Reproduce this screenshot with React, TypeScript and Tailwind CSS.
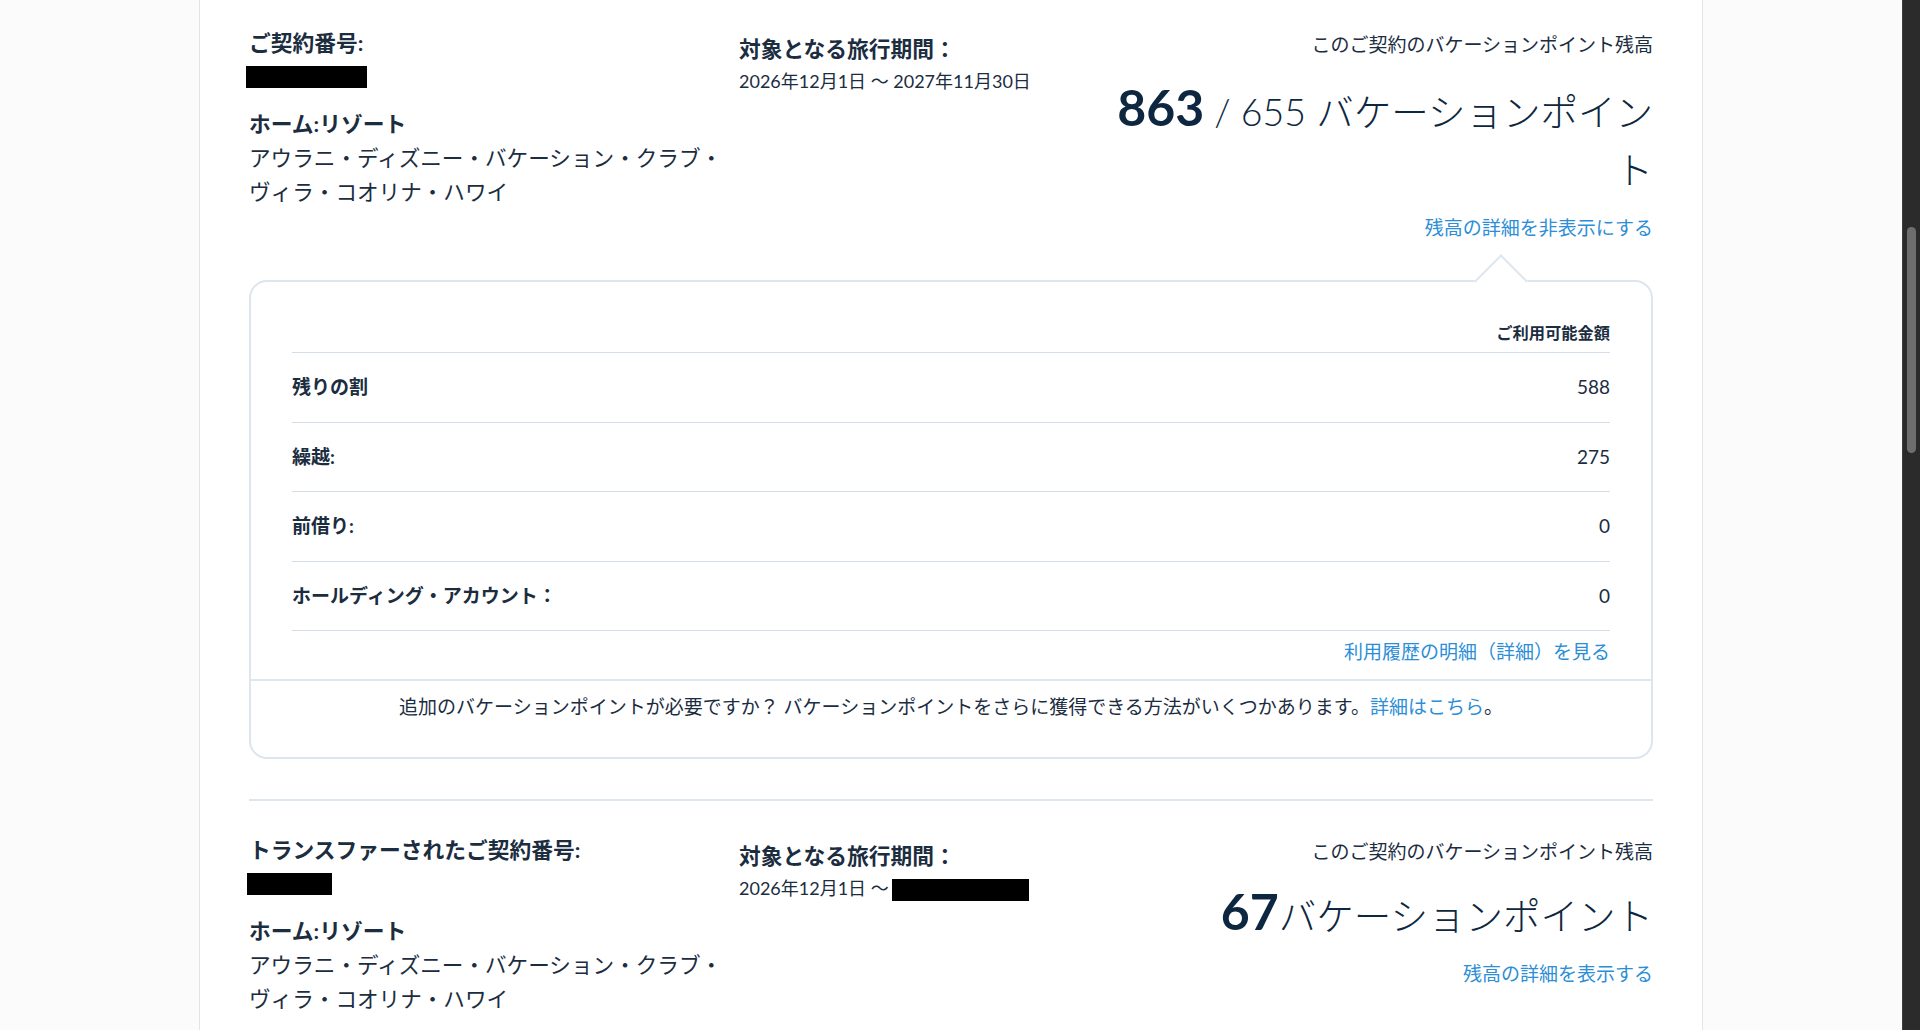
const RESORT = 'アウラニ・ディズニー・バケーション・クラブ・ヴィラ・コオリナ・ハワイ';

const ROWS: { label: string; value: string }[] = [
  { label: '残りの割', value: '588' },
  { label: '繰越:', value: '275' },
  { label: '前借り:', value: '0' },
  { label: 'ホールディング・アカウント：', value: '0' },
];

type SectionProps = {
  label: string;
  idClass: string;
  topClass: string;
  balanceClass: string;
  period: React.ReactNode;
  balance: React.ReactNode;
  link: string;
};

function ContractSection({ label, idClass, topClass, balanceClass, period, balance, link }: SectionProps) {
  return (
    <div className={`grid grid-cols-[490px_1fr_556px] ${topClass}`}>
      {/* Contract + resort */}
      <div className="pr-[8px]">
        <h3 className="text-[21.75px] font-bold leading-[30px]">{label}</h3>
        <div className={`mt-[8px] h-[22px] bg-black ${idClass}`} />
        <h3 className="mt-[21px] text-[21.75px] font-bold leading-[30px]">ホーム:リゾート</h3>
        <p className="mt-[2px] text-[21.6px] leading-[34px]">{RESORT}</p>
      </div>

      {/* Travel period */}
      <div className="pt-[6px]">
        <h3 className="text-[21.75px] font-bold leading-[30px]">対象となる旅行期間：</h3>
        <p className="mt-[3px] text-[18px] leading-[28px]">{period}</p>
      </div>

      {/* Balance */}
      <div className="pt-[3px] text-right">
        <p className="text-[19px] leading-[28px]">このご契約のバケーションポイント残高</p>
        <p className={`text-[37.5px] font-light leading-[58px] text-[#0d2740] ${balanceClass}`}>{balance}</p>
        <a className="mt-[15.5px] block text-[19px] leading-[28px] text-[#2b8ed6]">{link}</a>
      </div>
    </div>
  );
}

function BalanceCard() {
  return (
    <div className="relative mt-[38px] rounded-[18px] border-2 border-[#dde6ef]">
      <span className="absolute left-[1231px] top-[-20px] h-[38px] w-[38px] rotate-45 border-l-2 border-t-2 border-[#dde6ef] bg-white" />
      <div className="px-[41px] pt-[39px]">
        <div className="pb-[7px] text-right text-[16.25px] font-bold leading-[24px]">ご利用可能金額</div>
        <div className="border-t border-[#d3dee8]">
          {ROWS.map((r) => (
            <div
              key={r.label}
              className="flex h-[69.5px] items-center justify-between border-b border-[#d3dee8] text-[19px]"
            >
              <span className="font-bold">{r.label}</span>
              <span>{r.value}</span>
            </div>
          ))}
        </div>
        <a className="mb-[13px] mt-[7px] block text-right text-[19px] leading-[28px] text-[#2b8ed6]">
          利用履歴の明細（詳細）を見る
        </a>
      </div>
      <p className="border-t-2 border-[#dde6ef] pb-[36px] pt-[12px] text-center text-[19px] leading-[28px]">
        追加のバケーションポイントが必要ですか？ バケーションポイントをさらに獲得できる方法がいくつかあります。
        <a className="text-[#2b8ed6]">詳細はこちら</a>。
      </p>
    </div>
  );
}

export default function App() {
  return (
    <div className="flex h-[1030px] w-full overflow-hidden bg-[#fbfbfb] font-['Lato','Noto_Sans_CJK_JP',sans-serif] text-[#1b2d3f]">
      <div className="flex flex-1 justify-center">
        <div className="w-[1504px] shrink-0 border-x border-[#e4e4e4] bg-white px-[49px]">
          <ContractSection
            label="ご契約番号:"
            idClass="-ml-[3px] w-[121px]"
            topClass="pt-[28px]"
            balanceClass="mt-[23.5px]"
            period="2026年12月1日 〜 2027年11月30日"
            balance={
              <>
                <span className="text-[50px] font-bold leading-[40px]">863</span>
                <span> / 655 バケーションポイント</span>
              </>
            }
            link="残高の詳細を非表示にする"
          />
          <BalanceCard />
          <div className="mt-[40px] border-t-2 border-[#dde6ef]" />
          <ContractSection
            label="トランスファーされたご契約番号:"
            idClass="-ml-[2px] w-[85px]"
            topClass="pt-[34px]"
            balanceClass="mt-[20.5px]"
            period={
              <>
                2026年12月1日 〜
                <span className="ml-[3px] inline-block h-[22px] w-[137px] bg-black align-middle" />
              </>
            }
            balance={
              <>
                <span className="text-[50px] font-bold leading-[40px]">67</span>
                <span>バケーションポイント</span>
              </>
            }
            link="残高の詳細を表示する"
          />
        </div>
      </div>

      {/* Scrollbar */}
      <div className="flex w-[18px] shrink-0 justify-center border-l border-[#3d3d3d] bg-[#2b2b2b]">
        <div className="mt-[227px] h-[226px] w-[9px] rounded-full bg-[#6e6e6e]" />
      </div>
    </div>
  );
}
